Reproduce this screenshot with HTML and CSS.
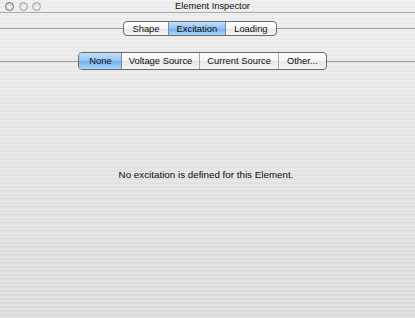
FILE: index.html
```html
<!DOCTYPE html>
<html lang="en">
<head>
    <meta charset="UTF-8">
    <title>Element Inspector</title>
    <link rel="stylesheet" href="styles.css">
</head>
<body>
    <div class="window">
        <!-- Title bar -->
        <div class="titlebar">
            <div class="lights">
                <span class="light dark"></span>
                <span class="light"></span>
                <span class="light"></span>
            </div>
            <div class="title">Element Inspector</div>
        </div>

        <!-- Inspector pages -->
        <div class="seg-row top-row">
            <div class="segmented small">
                <span class="seg">Shape</span>
                <span class="seg on">Excitation</span>
                <span class="seg">Loading</span>
            </div>
        </div>

        <!-- Excitation kind -->
        <div class="seg-row kind-row">
            <div class="segmented">
                <span class="seg on">None</span>
                <span class="seg">Voltage Source</span>
                <span class="seg">Current Source</span>
                <span class="seg">Other...</span>
            </div>
        </div>

        <div class="message">No excitation is defined for this Element.</div>
    </div>
</body>
</html>
```

FILE: styles.css
```css
body {
    margin: 0;
    font-family: "Liberation Sans", Arial, sans-serif;
    color: #0c0c0c;
}
.window {
    width: 415px;
    height: 318px;
    overflow: hidden;
    background:
        repeating-linear-gradient(to bottom, rgba(255, 255, 255, 0.22) 0 2px, rgba(255, 255, 255, 0) 2px 4px),
        linear-gradient(to bottom, #ececec, #e4e4e4 40%, #dadada);
}
.titlebar {
    height: 12px;
    border-bottom: 1px solid #aaaaaa;
    position: relative;
    display: flex;
    justify-content: center;
}
.lights {
    position: absolute;
    left: 5px;
    top: 2px;
    display: flex;
    gap: 4.5px;
}
.light {
    width: 9px;
    height: 9px;
    border-radius: 50%;
    box-sizing: border-box;
    border: 1px solid #a2a2a2;
    background: radial-gradient(circle at 50% 65%, #f4f4f4 0, #dcdcdc 70%, #c4c4c4 100%);
}
.light.dark {
    border-color: #707070;
}
.title {
    font-size: 9.3px;
    line-height: 12px;
    padding-left: 10px;
}
.seg-row {
    display: flex;
    justify-content: center;
    background: linear-gradient(#9a9a9a, #9a9a9a) center / 100% 1px no-repeat;
}
.top-row {
    margin-top: 8px;
    padding-right: 15px;
}
.kind-row {
    margin-top: 16px;
    padding-right: 10px;
}
.segmented {
    display: flex;
    border: 1px solid #6a6a6a;
    border-radius: 4px;
    overflow: hidden;
    background: linear-gradient(to bottom, #ffffff, #f4f4f4 50%, #e6e6e6 51%, #f6f6f6);
}
.seg {
    font-size: 9.4px;
    height: 16px;
    line-height: 16px;
    padding: 0 7px;
    border-left: 1px solid #a8a8a8;
}
.seg:first-child {
    border-left: none;
}
.small .seg {
    height: 13px;
    line-height: 13px;
    padding: 0 8px;
}
.seg.on {
    background: linear-gradient(to bottom, #c4e0fa, #92c4f2 50%, #72aeec 51%, #acd8fb);
    border-left-color: #6e8fb4;
}
.seg.on + .seg {
    border-left-color: #6e8fb4;
}
.kind-row .seg:nth-child(1) { padding: 0 9px 0 10px; }
.kind-row .seg:nth-child(4) { padding: 0 8px; }
.message {
    text-align: center;
    font-size: 9.8px;
    margin-top: 99px;
    padding-right: 3px;
}
```
